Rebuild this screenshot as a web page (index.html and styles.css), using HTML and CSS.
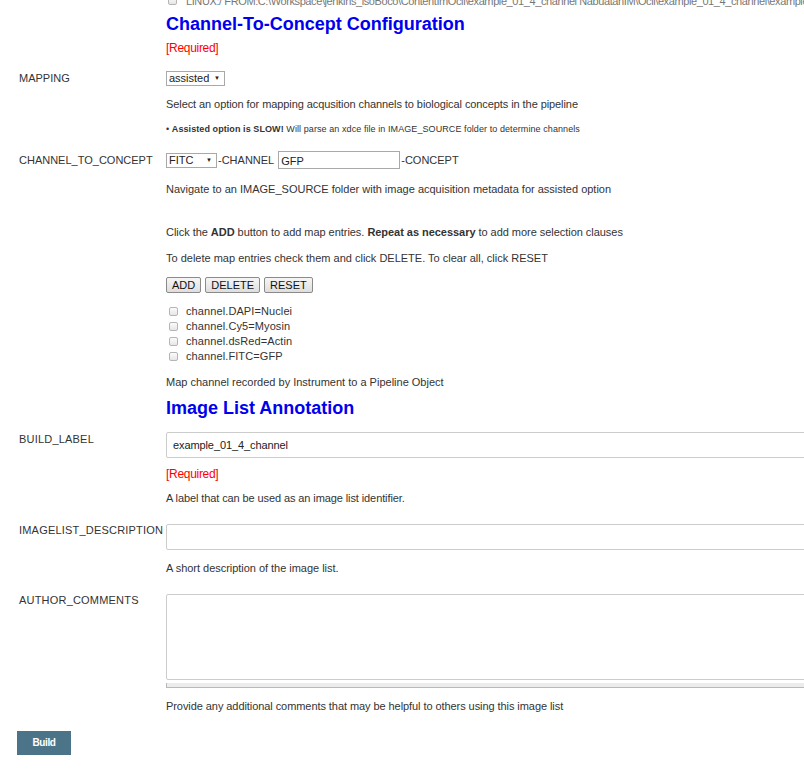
FILE: index.html
```html
<!DOCTYPE html>
<html>
<head>
<meta charset="utf-8">
<link rel="stylesheet" href="styles.css">
</head>
<body>
<div class="page">
  <div class="row top-cut">
    <div></div>
    <div class="cut-line"><span class="cb"></span><span class="path">LINUX:/ FROM:C:\Workspace\jenkins_isoBoco\ContentImOcli\example_01_4_channel  NabuatanIM\Ocli\example_01_4_channel\example_01_4_channel</span></div>
  </div>

  <div class="row">
    <div></div>
    <div>
      <h2 class="section-title first">Channel-To-Concept Configuration</h2>
      <div class="required">[Required]</div>
    </div>
  </div>

  <div class="row mapping">
    <div class="label">MAPPING</div>
    <div>
      <span class="select sel-assisted">assisted <span class="arrow">▼</span></span>
      <p class="help h-select">Select an option for mapping acqusition channels to biological concepts in the pipeline</p>
      <p class="note">• <b>Assisted option is SLOW!</b> Will parse an xdce file in IMAGE_SOURCE folder to determine channels</p>
    </div>
  </div>

  <div class="row c2c">
    <div class="label">CHANNEL_TO_CONCEPT</div>
    <div>
      <div class="inline-controls">
        <span class="select sel-fitc">FITC <span class="arrow">▼</span></span><span class="dash">-CHANNEL</span><span class="text-input">GFP</span><span class="dash">-CONCEPT</span>
      </div>
      <p class="help h-nav">Navigate to an IMAGE_SOURCE folder with image acquisition metadata for assisted option</p>
      <p class="help h-click">Click the <b>ADD</b> button to add map entries. <b>Repeat as necessary</b> to add more selection clauses</p>
      <p class="help h-del">To delete map entries check them and click DELETE. To clear all, click RESET</p>
      <div class="buttons">
        <span class="btn">ADD</span><span class="btn">DELETE</span><span class="btn">RESET</span>
      </div>
      <ul class="entries">
        <li><span class="cb"></span>channel.DAPI=Nuclei</li>
        <li><span class="cb"></span>channel.Cy5=Myosin</li>
        <li><span class="cb"></span>channel.dsRed=Actin</li>
        <li><span class="cb"></span>channel.FITC=GFP</li>
      </ul>
      <p class="help h-map">Map channel recorded by Instrument to a Pipeline Object</p>
    </div>
  </div>

  <div class="row">
    <div></div>
    <h2 class="section-title second">Image List Annotation</h2>
  </div>

  <div class="row build-label">
    <div class="label wide-label">BUILD_LABEL</div>
    <div>
      <div class="wide-input">example_01_4_channel</div>
      <div class="required r2">[Required]</div>
      <p class="narrow-help h-lbl">A label that can be used as an image list identifier.</p>
    </div>
  </div>

  <div class="row desc">
    <div class="label wide-label">IMAGELIST_DESCRIPTION</div>
    <div>
      <div class="wide-input"></div>
      <p class="narrow-help h-desc">A short description of the image list.</p>
    </div>
  </div>

  <div class="row comments">
    <div class="label wide-label">AUTHOR_COMMENTS</div>
    <div>
      <div class="wide-area"></div>
      <div class="area-bar"></div>
      <p class="narrow-help h-com">Provide any additional comments that may be helpful to others using this image list</p>
    </div>
  </div>

  <div class="build-wrap"><span class="build-btn">Build</span></div>
</div>
</body>
</html>
```

FILE: styles.css
```css
html, body {
  margin: 0;
  padding: 0;
  background: #fff;
  overflow: hidden;
}
body {
  font-family: "Liberation Sans", Arial, sans-serif;
  font-size: 11px;
  color: #333;
}
.page {
  width: 804px;
  height: 772px;
  overflow: hidden;
  padding-left: 19px;
  box-sizing: border-box;
}
.row {
  display: grid;
  grid-template-columns: 147px 660px;
}
.label {
  font-size: 11px;
  color: #333;
}
.wide-label {
  letter-spacing: 0.2px;
  white-space: nowrap;
}
p { margin: 0; }

.top-cut { height: 7px; overflow: visible; }
.cut-line {
  margin-top: -6px;
  color: #777;
  white-space: nowrap;
  overflow: hidden;
  display: flex;
  align-items: center;
  letter-spacing: -0.4px;
}
.cut-line .cb { margin-left: 2px; margin-right: 9px; }

.section-title {
  margin: 0;
  font-size: 18px;
  line-height: 22px;
  color: #0000ee;
  font-weight: bold;
}
.section-title.first { margin-top: 6px; }
.section-title.second { margin-top: 8px; }

.required {
  color: #f00;
  font-size: 12px;
  letter-spacing: -0.3px;
  margin-top: 6px;
  line-height: 14px;
}

.mapping { margin-top: 16px; }
.mapping .label { padding-top: 1px; }
.select {
  display: inline-flex;
  align-items: center;
  justify-content: space-between;
  box-sizing: border-box;
  height: 15px;
  border: 1px solid #a9a9a9;
  background: #fff;
  color: #222;
  padding: 0 4px 0 2px;
  font-size: 11px;
  line-height: 13px;
}
.arrow { font-size: 6px; margin-left: 4px; color: #222; }
.sel-assisted { width: 59px; }
.sel-fitc { width: 51px; }

.help { line-height: 14px; color: #333; }
.h-select { margin-top: 11px; letter-spacing: -0.08px; }
.note { margin-top: 12px; font-size: 9px; line-height: 12px; color: #333; letter-spacing: 0.08px; }
.note b { color: #333; }

.c2c { margin-top: 16px; }
.c2c .label { padding-top: 3px; }
.inline-controls {
  display: flex;
  align-items: center;
  height: 18px;
}
.dash { color: #333; margin: 0 1px; }
.text-input {
  box-sizing: border-box;
  width: 122px;
  height: 18px;
  margin-left: 3px;
  border: 1px solid #a9a9a9;
  padding: 3px 2px 0;
  color: #222;
  line-height: 13px;
}
.h-nav { margin-top: 13px; }
.h-click { margin-top: 29px; letter-spacing: -0.04px; }
.h-del { margin-top: 12px; }

.buttons { display: flex; gap: 4px; margin-top: 12px; }
.btn {
  box-sizing: border-box;
  height: 16px;
  padding: 0 5px;
  border: 1px solid #8a8a8a;
  border-radius: 2px;
  background: linear-gradient(#f6f6f6, #dedede);
  color: #111;
  font-size: 11px;
  line-height: 14px;
}

.entries { list-style: none; margin: 11px 0 0; padding: 0 0 0 3px; }
.entries li {
  display: flex;
  align-items: center;
  height: 15px;
  line-height: 15px;
  letter-spacing: 0.1px;
}
.cb {
  display: inline-block;
  width: 7px;
  height: 7px;
  border: 1px solid #b5b5b5;
  border-radius: 2px;
  background: linear-gradient(#fbfbfb, #e6e6e6);
  margin-right: 8px;
  flex: none;
}
.h-map { margin-top: 11px; }

.build-label { margin-top: 13px; }
.build-label .label { padding-top: 1px; }
.wide-input {
  box-sizing: border-box;
  height: 26px;
  border: 1px solid #ccc;
  border-radius: 2px;
  padding: 5px 6px;
  line-height: 14px;
  color: #222;
  letter-spacing: -0.1px;
}
.r2 { margin-top: 9px; }
.narrow-help { line-height: 14px; color: #333; }
.h-lbl { margin-top: 10px; letter-spacing: -0.1px; }

.desc { margin-top: 19px; }
.desc .label { padding-top: 0; }
.h-desc { margin-top: 11px; letter-spacing: -0.03px; }

.comments { margin-top: 19px; }
.comments .label { padding-top: 0; }
.wide-area {
  box-sizing: border-box;
  height: 86px;
  border: 1px solid #ccc;
  border-radius: 2px;
}
.area-bar {
  margin-top: 3px;
  height: 4px;
  background: #ececec;
  border-bottom: 1px solid #b9b9b9;
  border-left: 1px solid #b9b9b9;
}
.h-com { margin-top: 11px; letter-spacing: -0.07px; }

.build-wrap { margin-top: 18px; margin-left: -2px; }
.build-btn {
  display: inline-block;
  width: 54px;
  height: 24px;
  line-height: 24px;
  text-align: center;
  background: #4b7489;
  color: #fff;
  font-weight: bold;
  font-size: 10px;
  letter-spacing: -0.4px;
}
```
